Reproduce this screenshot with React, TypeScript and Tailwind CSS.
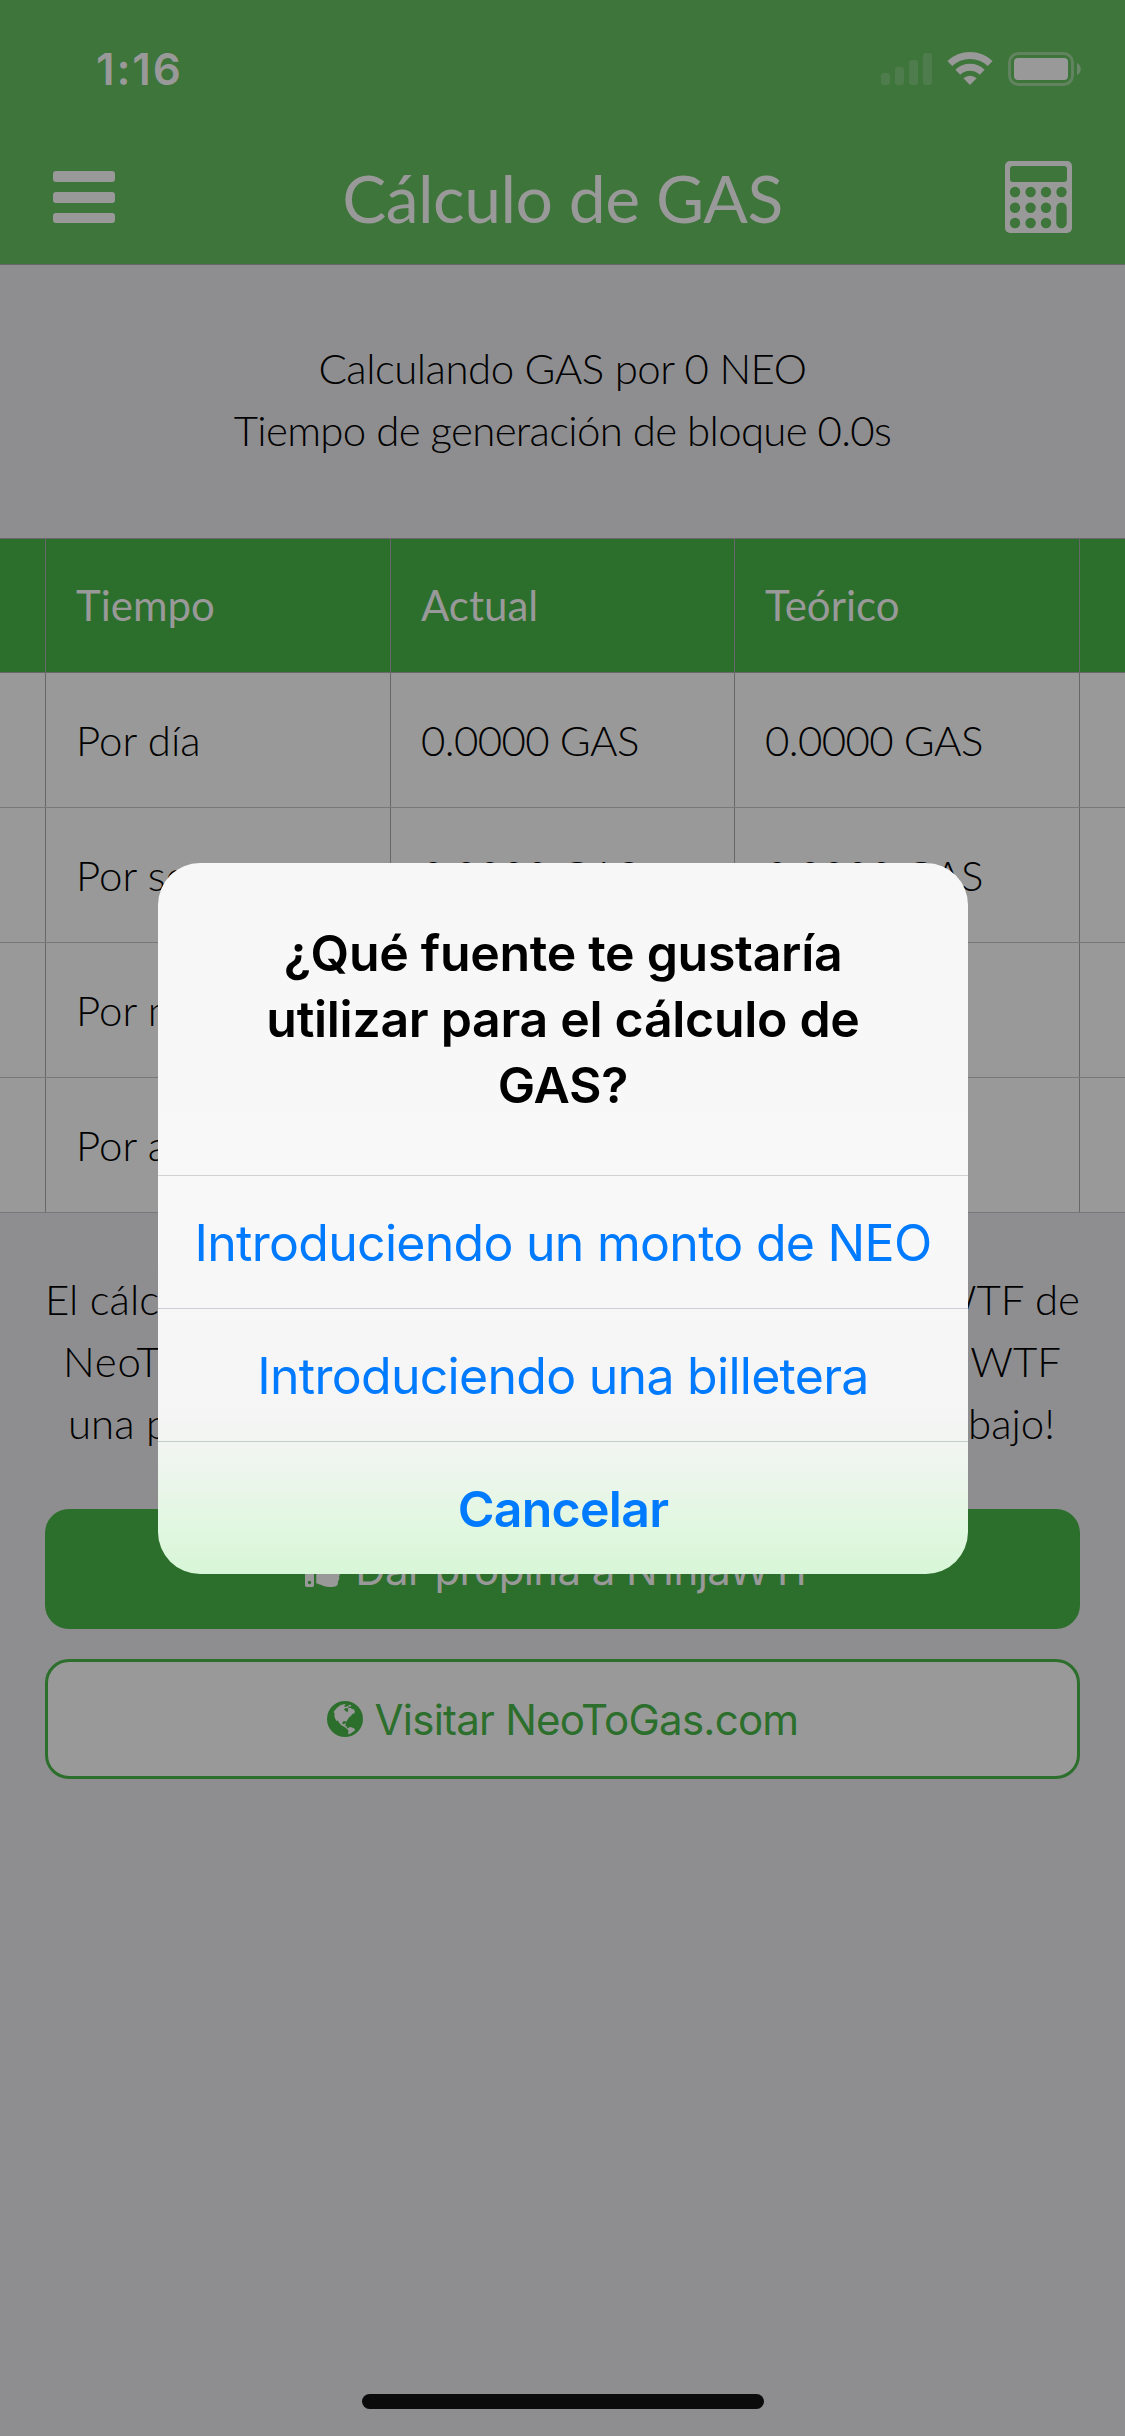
import React from "react";
import { FaThumbsUp } from "react-icons/fa";

const rows = [
  { label: "Por día", value: "0.0000 GAS" },
  { label: "Por semana", value: "0.0000 GAS" },
  { label: "Por mes", value: "" },
  { label: "Por año", value: "" },
];

function StatusIcons() {
  return (
    <svg className="absolute left-[881px] top-[50px]" width="202" height="38" viewBox="881 50 202 38">
      <g fill="#999" fillOpacity="0.2">
        <rect x="881" y="73" width="9" height="12" rx="3" />
        <rect x="895" y="67" width="9" height="18" rx="3" />
        <rect x="909" y="60" width="9" height="25" rx="3" />
        <rect x="923" y="53" width="9" height="32" rx="3" />
      </g>
      <g fill="none" stroke="#999" strokeWidth="7">
        <path d="M949.8 63.5a29.5 29.5 0 0 1 40.4 0" />
        <path d="M957.8 72.2a17.8 17.8 0 0 1 24.4 0" />
      </g>
      <path d="M963.4 78.3a9.5 9.5 0 0 1 13.2 0L970 85z" fill="#999" />
      <rect x="1009.5" y="53.5" width="63" height="31" rx="9" fill="none" stroke="#999" strokeOpacity="0.4" strokeWidth="3" />
      <rect x="1014" y="58" width="54" height="22" rx="4" fill="#999" />
      <path d="M1077 63c5 2 5 10 0 12z" fill="#999" fillOpacity="0.5" />
    </svg>
  );
}

function CalculatorIcon() {
  const holes: React.ReactNode[] = [];
  [192, 207.7, 223].forEach((y, r) =>
    [1015, 1030.6, 1046, 1061.5].forEach((x, c) => {
      if (c === 3 && r > 0) return;
      holes.push(<circle key={`${r}${c}`} cx={x} cy={y} r="5.2" />);
    })
  );
  return (
    <svg width="67" height="72" viewBox="1005 161 67 72">
      <rect x="1005" y="161" width="67" height="72" rx="5" fill="#999" />
      <g fill="#3d753a">
        <rect x="1010" y="166" width="57" height="16" rx="3" />
        {holes}
        <rect x="1056.3" y="202.5" width="10.4" height="25.7" rx="5.2" />
      </g>
    </svg>
  );
}

function GlobeIcon() {
  return (
    <svg width="36" height="36" viewBox="0 0 108 108">
      <circle cx="54" cy="54" r="54" fill="#2c6f2c" />
      <g fill="#999">
        <path d="M20 32L30 20L40 13L52 9L57 12L50 14L55 18L62 15L66 19L60 22L55 21L51 26L57 31L61 34L64 28L62 23L67 20L73 22L76 25L80 24L84 32L82 37L75 40L72 45L67 48L63 54L60 58L58 63L53 60L47 62L46 69L51 70L54 67L57 68L54 74L59 76L60 81L65 82L60 84L53 78L43 73L37 66L32 58L29 61L25 54L22 46L23 38Z" />
        <path d="M62 15L68 11L73 13L70 17Z" />
        <path d="M64 80L70 78L77 80L84 84L83 89L77 93L72 97L66 100L63 97L65 90L61 85Z" />
      </g>
    </svg>
  );
}

export default function App() {
  return (
    <div className="relative h-[2436px] w-[1125px] overflow-hidden bg-[#8e8e90] font-['Lato'] text-[42px] font-light text-black">
      <header className="relative flex h-[265px] items-end justify-between border-b border-[#67676a] bg-[#3d753a] px-[53px] text-[#999]">
        <div className="absolute left-[96px] top-[42px] font-['Inter'] text-[44px] font-semibold leading-[54px] tracking-[1.8px]">1:16</div>
        <StatusIcons />
        <div className="mb-[41px] flex w-[67px] flex-col gap-[10px]">
          <div className="h-[11px] w-[62px] rounded-[3px] bg-[#999]" />
          <div className="h-[11px] w-[62px] rounded-[3px] bg-[#999]" />
          <div className="h-[10px] w-[62px] rounded-[3px] bg-[#999]" />
        </div>
        <h1 className="mb-[26px] whitespace-nowrap text-[66px] font-normal leading-[80px] tracking-[-0.5px]">Cálculo de GAS</h1>
        <div className="mb-[31px]"><CalculatorIcon /></div>
      </header>

      <div className="flex h-[273px] flex-col items-center pt-[72px] leading-[62px] tracking-[-0.7px]">
        <div className="tracking-[-0.5px]">Calculando GAS por 0 NEO</div>
        <div>Tiempo de generación de bloque 0.0s</div>
      </div>

      <div className="border-t border-[#67676a]">
        <div className="grid h-[134px] grid-cols-[46px_345px_344px_345px_45px] border-b border-[#67676a] bg-[#2c6f2c] font-normal leading-[133px] text-[#999]">
          <div className="border-r border-[#67676a]" />
          <div className="border-r border-[#67676a] pl-[30px]">Tiempo</div>
          <div className="border-r border-[#67676a] pl-[30px]">Actual</div>
          <div className="border-r border-[#67676a] pl-[30px]">Teórico</div>
          <div />
        </div>
        {rows.map((r) => (
          <div key={r.label} className="grid h-[135px] grid-cols-[46px_345px_344px_345px_45px] border-b border-[#78787a] bg-[#999] leading-[134px]">
            <div className="border-r border-[#67676a]" />
            <div className="border-r border-[#67676a] pl-[30px]">{r.label}</div>
            <div className="border-r border-[#67676a] pl-[30px] tracking-[-0.6px]">{r.value}</div>
            <div className="border-r border-[#67676a] pl-[30px] tracking-[-0.6px]">{r.value}</div>
            <div />
          </div>
        ))}
      </div>

      <div className="px-[45px] pt-[55px] leading-[62px]">
        <div className="flex justify-between"><span>El cálculo</span><span>N1njaWTF de</span></div>
        <div className="flex justify-between pl-[18px] pr-[19px]"><span className="tracking-[0.8px]">NeoToGas</span><span>WTF</span></div>
        <div className="flex justify-between pl-[23px] pr-[25px]"><span>una propina</span><span>trabajo!</span></div>
      </div>

      <div className="mt-[55px] flex flex-col gap-[30px] px-[45px] font-['Inter'] font-normal tracking-[-0.75px]">
        <div className="flex h-[120px] items-center justify-center gap-[14px] rounded-[24px] bg-[#2c6f2c] tracking-[-0.6px] text-[#999]">
          <FaThumbsUp size={36} />
          <span>Dar propina a N1njaWTF</span>
        </div>
        <div className="flex h-[120px] items-center justify-center gap-[12px] rounded-[24px] border-[3px] border-[#2c6f2c] bg-[#999] text-[#2c6f2c]">
          <GlobeIcon />
          <span>Visitar NeoToGas.com</span>
        </div>
      </div>

      <div className="absolute left-[158px] top-[863px] flex h-[711px] w-[810px] flex-col rounded-[42px] bg-[linear-gradient(180deg,#f7f7f7_0%,#f8f8f8_50%,#f4f5f4_78%,#eef5ee_85%,#e1f7e1_93%,#d8f6d8_100%)] text-center font-['Inter'] text-[50px] font-normal tracking-[-0.72px] text-[#007aff]">
        <div className="h-[312px] pt-[57px] font-semibold leading-[66px] tracking-[-0.3px] text-black">
          <div>¿Qué fuente te gustaría</div>
          <div>utilizar para el cálculo de</div>
          <div>GAS?</div>
        </div>
        <div className="h-[133px] border-t border-[#d2d4d4] leading-[134px]">Introduciendo un monto de NEO</div>
        <div className="h-[133px] border-t border-[#cdcfd6] leading-[134px]">Introduciendo una billetera</div>
        <div className="h-[133px] border-t border-[#bfcfc4] font-semibold leading-[134px]">Cancelar</div>
      </div>

      <div className="absolute bottom-[27px] left-[362px] h-[15px] w-[402px] rounded-full bg-[#0b0b0b]" />
    </div>
  );
}
